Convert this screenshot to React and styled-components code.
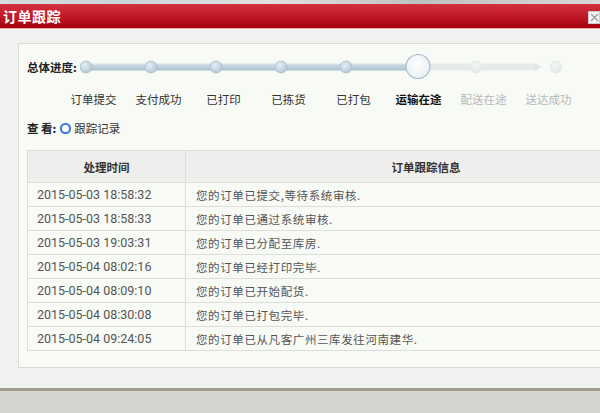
import React from "react";
import styled, { createGlobalStyle } from "styled-components";

const Global = createGlobalStyle`
  html, body { margin: 0; padding: 0; }
  body {
    width: 600px; height: 413px; overflow: hidden;
    background: #d3d5d1;
    font-family: Roboto, "Noto Sans CJK SC", "Noto Sans", sans-serif;
  }
`;

const TopStrip = styled.div`
  height: 4px;
  background: linear-gradient(90deg, #d9dcdc 0%, #c9d6da 20%, #e2e2e0 45%, #bfc2c2 70%, #d8d8d6 100%);
`;

const Dialog = styled.div`
  background: #f1f3f0;
  border-bottom: 3px solid #a29b90;
`;

const TitleBar = styled.div`
  height: 24px;
  display: flex;
  align-items: center;
  justify-content: space-between;
  padding-left: 3px;
  background: linear-gradient(180deg, #d2313f 0%, #c41c2b 45%, #a9000e 100%);
  border-bottom: 1px solid #e8b0a8;
`;

const Title = styled.span`
  color: #fff;
  font-family: "Noto Sans CJK SC", sans-serif;
  font-weight: 700;
  font-size: 14px;
  letter-spacing: 0.5px;
`;

const Close = styled.div`
  width: 12px;
  height: 13px;
  margin-top: 3px;
  background: #f4f4f4;
  border: 1px solid #ccc;
  box-sizing: border-box;
  display: flex;
  align-items: center;
  justify-content: center;
`;

const Body = styled.div`
  padding: 14px 0 20px 18px;
`;

const Panel = styled.div`
  background: #f8faf6;
  border: 1px solid #d8dad6;
  border-right: none;
  padding: 11px 0 16px 8px;
`;

const ProgressRow = styled.div`
  display: flex;
  align-items: center;
  height: 24px;
`;

const Label = styled.span`
  font-family: "Noto Sans CJK SC", sans-serif;
  font-weight: 700;
  font-size: 11.5px;
  color: #222;
  white-space: nowrap;
`;

const Steps = styled.div`
  display: flex;
  margin-top: 12px;
  padding-left: 34px;
  height: 16px;
  align-items: center;
`;

const Step = styled.span`
  width: 65px;
  text-align: center;
  font-family: "Noto Sans CJK SC", sans-serif;
  font-size: 11.5px;
  font-weight: ${(p) => (p.$current ? 700 : 400)};
  color: ${(p) => (p.$current ? "#111" : p.$future ? "#b4b8b6" : "#333")};
  white-space: nowrap;
`;

const ViewRow = styled.div`
  display: flex;
  align-items: center;
  margin-top: 13px;
  height: 16px;
`;

const Radio = styled.span`
  width: 7px;
  height: 7px;
  border-radius: 50%;
  border: 2.5px solid #3c7fe0;
  background: #fff;
  margin: 0 3px 0 4px;
  box-shadow: 0 0 1px #7aa8ee;
`;

const Option = styled.span`
  font-family: "Noto Sans CJK SC", sans-serif;
  font-size: 11.5px;
  color: #333;
`;

const Table = styled.table`
  margin-top: 14px;
  width: 640px;
  border-collapse: collapse;
  table-layout: fixed;
`;

const Th = styled.th`
  height: 31px;
  background: #eeeeec;
  border: 1px solid #dcdcda;
  font-family: "Noto Sans CJK SC", sans-serif;
  font-size: 11.5px;
  font-weight: 700;
  color: #333;
  text-align: center;
  padding: 0;
`;

const Td = styled.td`
  height: 23px;
  border: 1px solid #dcdeda;
  background: #f8faf6;
  color: #555;
  padding: 0 0 0 ${(p) => (p.$msg ? 10 : 9)}px;
  white-space: nowrap;
  font-family: ${(p) => (p.$msg ? '"Noto Sans CJK SC", sans-serif' : 'Roboto, sans-serif')};
  font-size: ${(p) => (p.$msg ? "11.5px" : "12.5px")};
  letter-spacing: ${(p) => (p.$msg ? "0.6px" : "0")};
`;

const records = [
  ["2015-05-03 18:58:32", "您的订单已提交,等待系统审核."],
  ["2015-05-03 18:58:33", "您的订单已通过系统审核."],
  ["2015-05-03 19:03:31", "您的订单已分配至库房."],
  ["2015-05-04 08:02:16", "您的订单已经打印完毕."],
  ["2015-05-04 08:09:10", "您的订单已开始配货."],
  ["2015-05-04 08:30:08", "您的订单已打包完毕."],
  ["2015-05-04 09:24:05", "您的订单已从凡客广州三库发往河南建华."],
];

const steps = ["订单提交", "支付成功", "已打印", "已拣货", "已打包", "运输在途", "配送在途", "送达成功"];

function Track() {
  const done = [88, 153, 218, 283, 348];
  return (
    <svg width="488" height="26" viewBox="82 54 488 26" style={{ marginLeft: 3 }}>
      <defs>
        <linearGradient id="ta" x1="0" y1="0" x2="0" y2="1">
          <stop offset="0" stopColor="#d6e2ea" />
          <stop offset="1" stopColor="#a9c0d0" />
        </linearGradient>
        <radialGradient id="na" cx="0.4" cy="0.35" r="0.7">
          <stop offset="0" stopColor="#e6eef4" />
          <stop offset="1" stopColor="#b2c6d4" />
        </radialGradient>
        <radialGradient id="nb" cx="0.45" cy="0.4" r="0.7">
          <stop offset="0" stopColor="#ffffff" />
          <stop offset="1" stopColor="#e4ecf2" />
        </radialGradient>
        <radialGradient id="nc" cx="0.45" cy="0.4" r="0.7">
          <stop offset="0" stopColor="#f2f5f4" />
          <stop offset="1" stopColor="#e2e8e8" />
        </radialGradient>
      </defs>
      <rect x="84" y="63.5" width="336" height="7" rx="3" fill="url(#ta)" />
      <rect x="420" y="64" width="118" height="6" fill="#e6ecec" stroke="#dde4e4" strokeWidth="0.5" />
      <path d="M536 62.5 L544 67 L536 71.5 Z" fill="#e2e8e8" />
      {done.map((x) => (
        <circle key={x} cx={x} cy="67" r="6" fill="url(#na)" stroke="#a6bccc" strokeWidth="0.8" />
      ))}
      <circle cx="420" cy="66.5" r="12" fill="url(#nb)" stroke="#a8bfcf" strokeWidth="1.2" />
      <circle cx="478" cy="67" r="6" fill="url(#nc)" stroke="#e0e6e6" strokeWidth="0.6" />
      <circle cx="558" cy="67" r="6" fill="url(#nc)" stroke="#e0e6e6" strokeWidth="0.6" />
    </svg>
  );
}

export default function App() {
  return (
    <>
      <Global />
      <TopStrip />
      <Dialog>
        <TitleBar>
          <Title>订单跟踪</Title>
          <Close>
            <svg width="9" height="9" viewBox="0 0 9 9">
              <path d="M1 1 L8 8 M8 1 L1 8" stroke="#999" strokeWidth="1.3" />
            </svg>
          </Close>
        </TitleBar>
        <Body>
          <Panel>
            <ProgressRow>
              <Label>总体进度:</Label>
              <Track />
            </ProgressRow>
            <Steps>
              {steps.map((s, i) => (
                <Step key={s} $current={i === 5} $future={i > 5}>
                  {s}
                </Step>
              ))}
            </Steps>
            <ViewRow>
              <Label>查 看:</Label>
              <Radio />
              <Option>跟踪记录</Option>
            </ViewRow>
            <Table>
              <colgroup>
                <col style={{ width: 158 }} />
                <col />
              </colgroup>
              <thead>
                <tr>
                  <Th>处理时间</Th>
                  <Th>订单跟踪信息</Th>
                </tr>
              </thead>
              <tbody>
                {records.map(([t, m]) => (
                  <tr key={t}>
                    <Td>{t}</Td>
                    <Td $msg>{m}</Td>
                  </tr>
                ))}
              </tbody>
            </Table>
          </Panel>
        </Body>
      </Dialog>
    </>
  );
}
